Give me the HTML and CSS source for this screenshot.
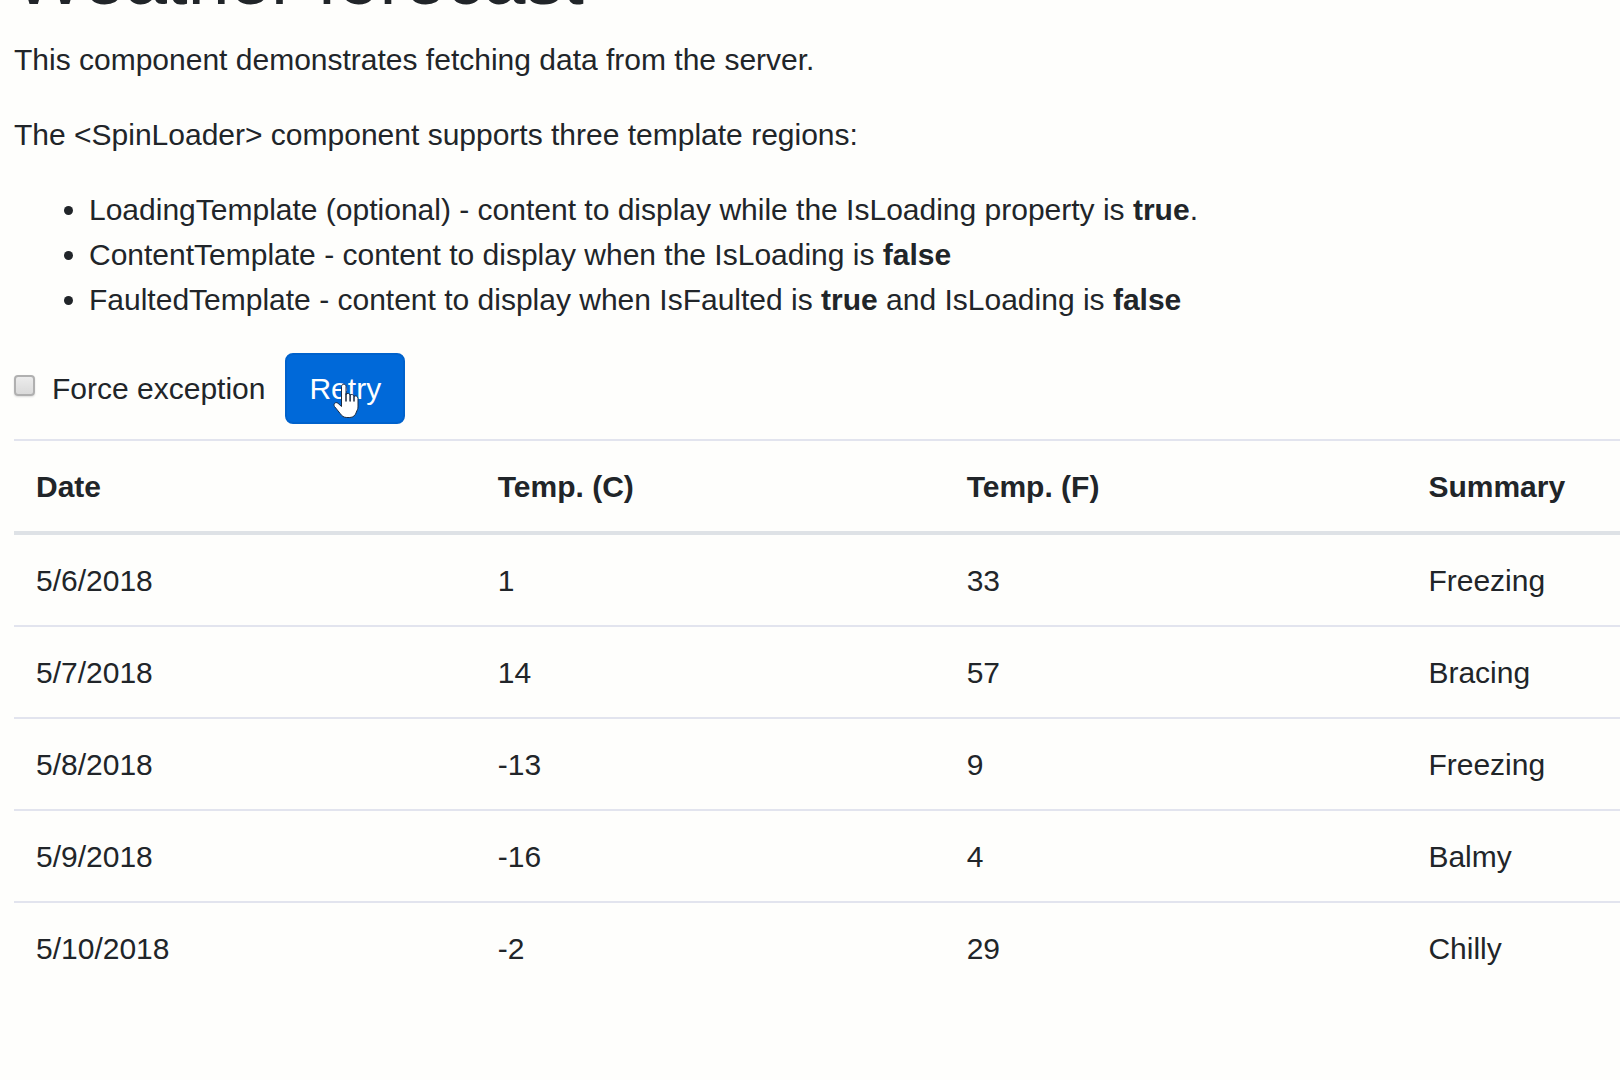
FILE: index.html
```html
<!DOCTYPE html>
<html lang="en">
<head>
<meta charset="utf-8">
<title>Weather forecast</title>
<link rel="stylesheet" href="styles.css">
</head>
<body>
<main class="content">
  <h1 class="title">Weather forecast</h1>
  <p class="text">This component demonstrates fetching data from the server.</p>
  <p class="text">The &lt;SpinLoader&gt; component supports three template regions:</p>
  <ul class="regions">
    <li>LoadingTemplate (optional) - content to display while the IsLoading property is <strong>true</strong>.</li>
    <li>ContentTemplate - content to display when the IsLoading is <strong>false</strong></li>
    <li>FaultedTemplate - content to display when IsFaulted is <strong>true</strong> and IsLoading is <strong>false</strong></li>
  </ul>
  <div class="controls">
    <label class="check"><input class="check-box" type="checkbox"><span>Force exception</span></label>
    <div class="retry">
      <button class="button" type="button">Retry</button>
      <svg class="pointer" viewBox="0 0 28 36" width="28" height="36" aria-hidden="true">
        <path d="M8.500 3.500c0-3 4.500-3 4.500 0v8c1-1.700 3.800-1.300 4.100.6 1.200-1.200 3.500-.6 3.900 1.200 1.600-1 4 0 4 2.300v8.400c0 2-1 3.400-1.600 5-.8 3-3 5.500-6.600 5.500h-3c-3 0-5-1.500-6.500-3.800L1.500 23.500c-1.500-2.600 1-5 3.400-3.300l3.600 3.300z" fill="#fff" stroke="#1b2a40" stroke-width="1" stroke-linejoin="round"/>
        <path d="M13 11v7M17.100 12v6M21 13.500V18" fill="none" stroke="#1b2a40" stroke-width="1.500" stroke-linecap="round"/>
      </svg>
    </div>
  </div>
  <table class="table">
    <colgroup><col class="col-date"><col class="col-c"><col class="col-f"><col></colgroup>
    <thead>
      <tr><th scope="col">Date</th><th scope="col">Temp. (C)</th><th scope="col">Temp. (F)</th><th scope="col">Summary</th></tr>
    </thead>
    <tbody>
      <tr><td>5/6/2018</td><td>1</td><td>33</td><td>Freezing</td></tr>
      <tr><td>5/7/2018</td><td>14</td><td>57</td><td>Bracing</td></tr>
      <tr><td>5/8/2018</td><td>-13</td><td>9</td><td>Freezing</td></tr>
      <tr><td>5/9/2018</td><td>-16</td><td>4</td><td>Balmy</td></tr>
      <tr><td>5/10/2018</td><td>-2</td><td>29</td><td>Chilly</td></tr>
    </tbody>
  </table>
</main>
</body>
</html>
```
FILE: styles.css
```css
* {
  box-sizing: border-box;
}

body {
  margin: 0;
  background: #fefefc;
  color: #212529;
  font-family: "Liberation Sans", Arial, sans-serif;
  font-size: 30px;
  line-height: 45px;
}

.content {
  display: flow-root;
  padding-left: 14px;
}

/* The page sits scrolled down, with the heading mostly above the top edge. */
.title {
  margin: -67px 0 14px;
  font-size: 75px;
  font-weight: 500;
  line-height: 90px;
}

.text {
  margin: 0 0 30px;
}

.regions {
  margin: 0 0 31px;
  padding-left: 75px;
}

.controls {
  display: flex;
  align-items: center;
  gap: 20px;
  margin-bottom: 15px;
}

.check {
  display: flex;
  align-items: center;
  gap: 17px;
}

.check-box {
  appearance: none;
  width: 21px;
  height: 21px;
  margin: 0 0 6px;
  border: 2px solid #b0b0b0;
  border-radius: 4px;
  background: linear-gradient(#ececec, #dadada);
  box-shadow: 0 1px 2px #dcdcdc;
}

.retry {
  position: relative;
}

.button {
  display: block;
  padding: 11px 22px;
  border: 2px solid #0062cc;
  border-radius: 8px;
  background: #0069d9;
  color: #fff;
  font: inherit;
  cursor: pointer;
}

.pointer {
  position: absolute;
  left: 48px;
  top: 30px;
  pointer-events: none;
}

.table {
  width: 100%;
  border-collapse: collapse;
  table-layout: fixed;
}

.col-date,
.col-f {
  width: 28.75%;
}

.col-c {
  width: 29.2%;
}

.table th,
.table td {
  padding: 23px 22px 22px;
  border-top: 2px solid #e2e4ee;
  text-align: left;
}

.table thead th {
  border-bottom: 4px solid #dee2e6;
}
```
